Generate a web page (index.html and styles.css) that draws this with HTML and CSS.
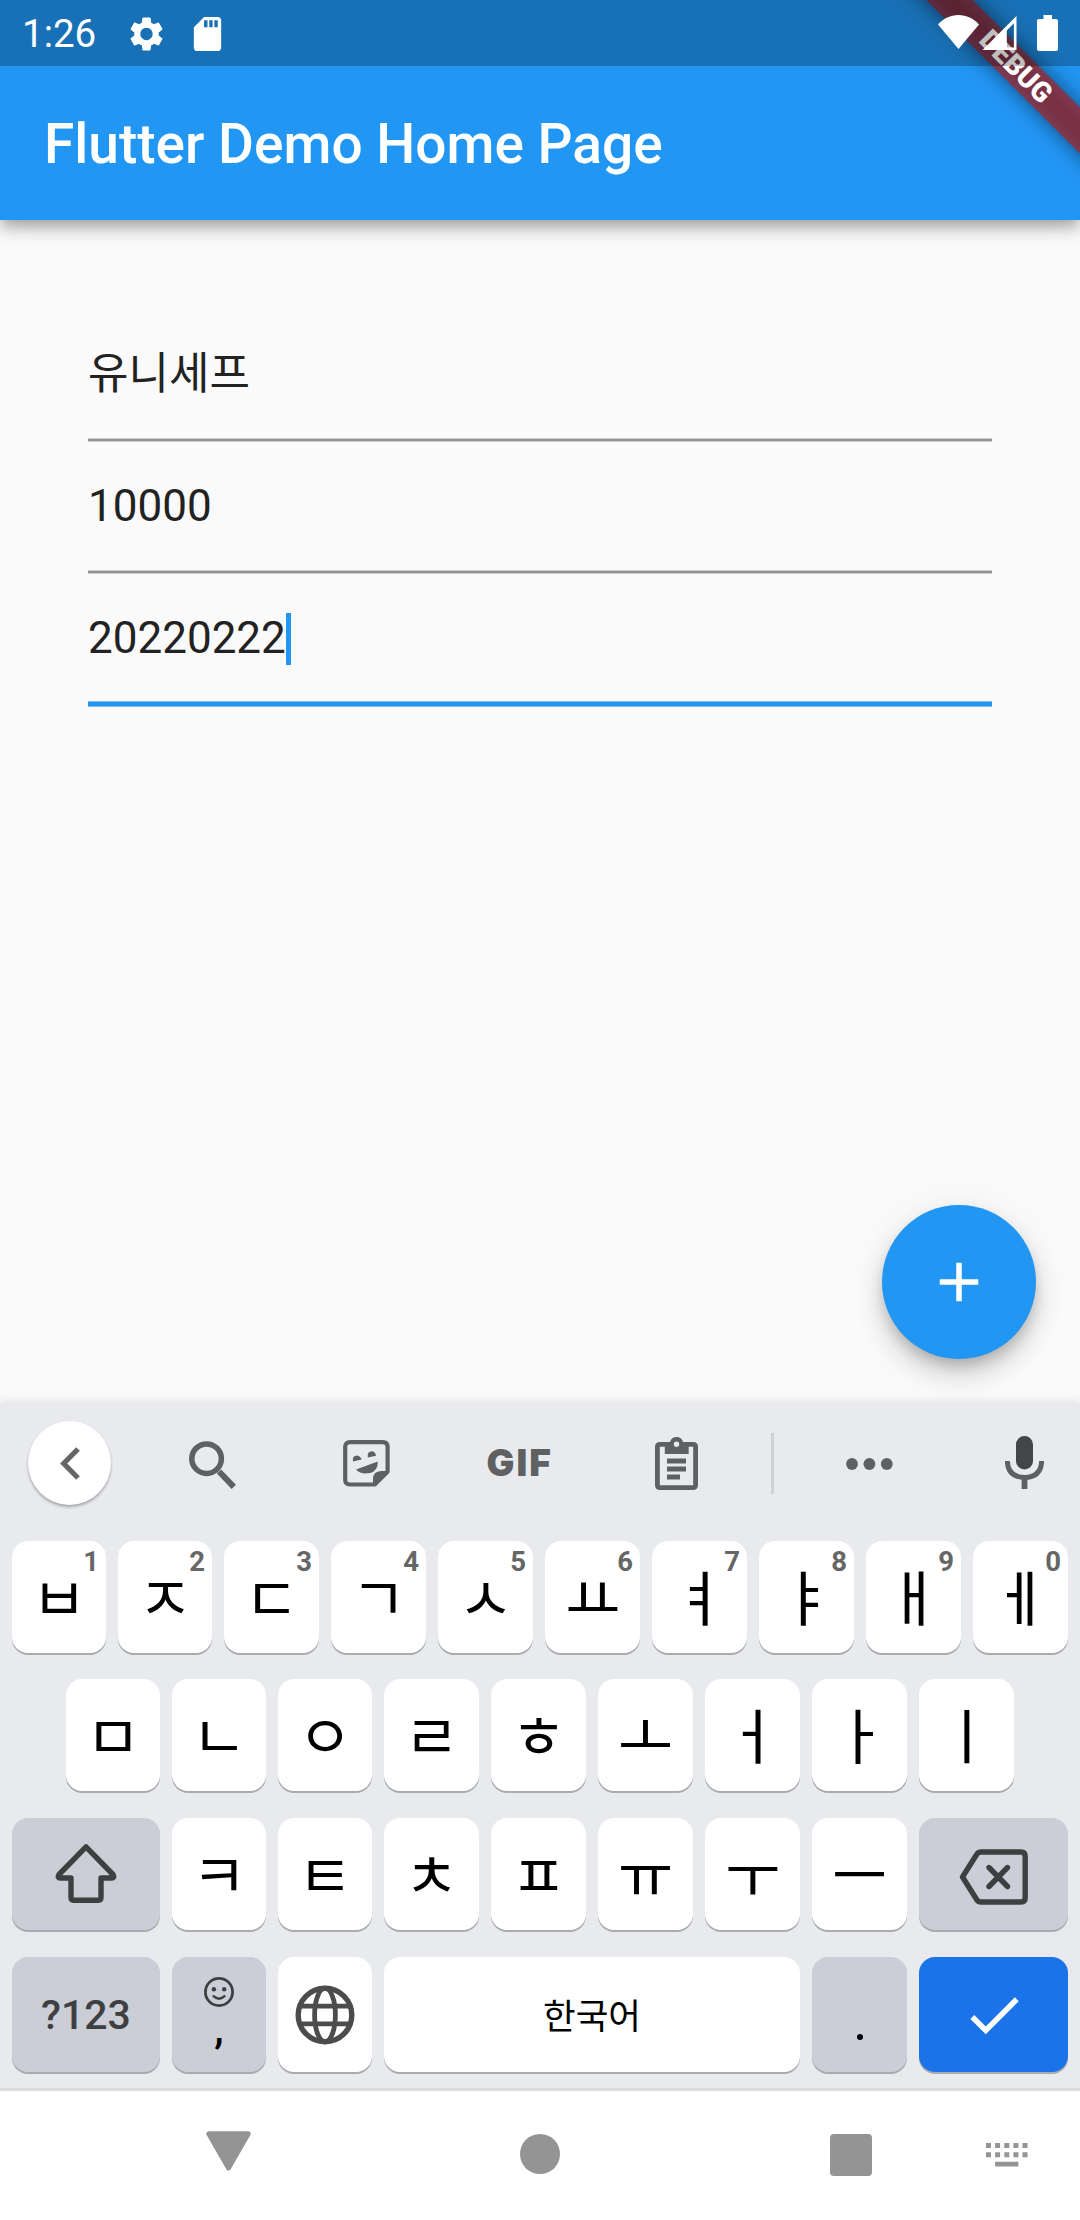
FILE: index.html
```html
<!DOCTYPE html>
<html lang="ko">
<head>
<meta charset="utf-8">
<title>Flutter Demo Home Page</title>
<link rel="stylesheet" href="styles.css">
</head>
<body>
<div class="screen">
  <div class="banner-clip"><div class="banner-shadow"></div><div class="banner">DEBUG</div></div>
  <header class="status">
    <span class="clock">1:26</span>
    <svg class="gear" viewBox="0 0 24 24"><path d="M19.14 12.94c.04-.3.06-.61.06-.94 0-.32-.02-.64-.07-.94l2.03-1.58c.18-.14.23-.41.12-.61l-1.92-3.32c-.12-.22-.37-.29-.59-.22l-2.39.96c-.5-.38-1.03-.7-1.62-.94l-.36-2.54c-.04-.24-.24-.41-.48-.41h-3.84c-.24 0-.43.17-.47.41l-.36 2.54c-.59.24-1.13.57-1.62.94l-2.39-.96c-.22-.08-.47 0-.59.22L2.74 8.87c-.12.21-.08.47.12.61l2.03 1.58c-.05.3-.09.63-.09.94s.02.64.07.94l-2.03 1.58c-.18.14-.23.41-.12.61l1.92 3.32c.12.22.37.29.59.22l2.39-.96c.5.38 1.03.7 1.62.94l.36 2.54c.05.24.24.41.48.41h3.84c.24 0 .44-.17.47-.41l.36-2.54c.59-.24 1.13-.56 1.62-.94l2.39.96c.22.08.47 0 .59-.22l1.92-3.32c.12-.22.07-.47-.12-.61l-2.01-1.58zM12 15.6c-1.98 0-3.6-1.62-3.6-3.6s1.62-3.6 3.6-3.6 3.6 1.62 3.6 3.6-1.62 3.6-3.6 3.6z"/></svg>
    <svg class="sd" viewBox="0 0 24 24"><path d="M18 2h-8L4.020 8 4 20c0 1.100.9 2 2 2h12c1.100 0 2-.9 2-2V4c0-1.100-.9-2-2-2zm-6 6h-2V4h2v4zm3 0h-2V4h2v4zm3 0h-2V4h2v4z"/></svg>
    <span class="spacer"></span>
    <svg class="wifi" viewBox="0 0 41 34"><path d="M0 9.500C5.500 3.500 12.500 0 20.500 0S35.500 3.500 41 9.500L20.500 34z"/></svg>
    <svg class="signal" viewBox="0 0 35 35"><path fill-rule="evenodd" d="M35 0V35H0zM32.300 7.500L25 15V32.500H32.300z"/></svg>
    <svg class="battery" viewBox="0 0 21 36"><path d="M6.500 0h8.500v4h4q2 0 2 2v28q0 2-2 2H2q-2 0-2-2V6q0-2 2-2h4.500z"/></svg>
  </header>
  <div class="appbar"><h1>Flutter Demo Home Page</h1></div>
  <main class="content">
    <div class="field">유니세프</div>
    <div class="field">10000</div>
    <div class="field focused">20220222<span class="caret"></span></div>
    <div class="fab"><svg width="66" height="66" viewBox="0 0 24 24"><path fill="#fff" d="M19 13h-6v6h-2v-6H5v-2h6V5h2v6h6v2z"/></svg></div>
  </main>
  <section class="keyboard">
    <div class="tools">
      <div class="back"><svg width="20" height="33" viewBox="0 0 20 33"><path fill="none" stroke="#666" stroke-width="5.200" d="M18 2L3.700 16.500L18 31"/></svg></div>
      <svg class="t-search" viewBox="0 0 47 48"><g fill="none" stroke="#5f6062"><circle cx="17.600" cy="17.700" r="14.800" stroke-width="5.500"/><path stroke-width="6" d="M30 30.500L44.800 45.800"/></g></svg>
      <svg class="t-sticker" viewBox="0 0 47 47"><path fill="none" stroke="#5f6062" stroke-width="4.200" stroke-linejoin="round" d="M7 2.200H39.800Q44.600 2.200 44.600 7V31.500L31.500 44.500H7Q2.200 44.500 2.200 39.700V7Q2.200 2.200 7 2.200z"/><g fill="#5f6062"><path d="M46 31H38Q30 31.500 30 39V46H33L46 33z"/><path d="M13 29.500L34.800 21.500Q35 31 27 33Q17.500 34.600 13 29.500z"/><path d="M10 21.500Q9 15.500 14 15.400Q17.500 15.800 18.600 19.500z"/><path d="M24.800 17.500Q24 11.300 29 11.200Q32.500 11.800 33 15.700z"/></g></svg>
      <span class="t-gif">GIF</span>
      <svg class="t-clip" viewBox="0 0 43 53"><path fill="#5f6062" fill-rule="evenodd" d="M5 5H15Q16.500 0 21.500 0T28 5H38Q43 5 43 10V48Q43 53 38 53H5Q0 53 0 48V10Q0 5 5 5zM4.800 9.700V48.200H38.200V9.700H33.700V17H9.800V9.700zM21.500 4.500A2.700 2.700 0 1 0 21.500 9.900A2.700 2.700 0 1 0 21.500 4.500z"/><path fill="#5f6062" d="M12 21.500h19v5h-19zM12 29.500h19v5h-19zM12 37.500h13v5h-13z"/></svg>
      <span class="t-divider"></span>
      <svg class="t-more" viewBox="0 0 47 12"><g fill="#5f6062"><circle cx="6" cy="6" r="5.900"/><circle cx="23.400" cy="6" r="5.900"/><circle cx="40.800" cy="6" r="5.900"/></g></svg>
      <svg class="t-mic" viewBox="0 0 39 53"><rect x="11" y="0" width="17" height="33.500" rx="8.500" fill="#444547"/><path fill="none" stroke="#5f6062" stroke-width="5" d="M2.400 25Q2.800 41 19.500 41.500Q36.200 41 36.600 25"/><path fill="none" stroke="#5f6062" stroke-width="5.800" d="M19.500 41V53"/></svg>
    </div>
    <div class="row r1">
      <div class="key"><i>1</i><b>ㅂ</b></div><div class="key"><i>2</i><b>ㅈ</b></div><div class="key"><i>3</i><b>ㄷ</b></div><div class="key"><i>4</i><b>ㄱ</b></div><div class="key"><i>5</i><b>ㅅ</b></div><div class="key"><i>6</i><b>ㅛ</b></div><div class="key"><i>7</i><b>ㅕ</b></div><div class="key"><i>8</i><b>ㅑ</b></div><div class="key"><i>9</i><b>ㅐ</b></div><div class="key"><i>0</i><b>ㅔ</b></div>
    </div>
    <div class="row r2">
      <div class="key"><b>ㅁ</b></div><div class="key"><b>ㄴ</b></div><div class="key"><b>ㅇ</b></div><div class="key"><b>ㄹ</b></div><div class="key"><b>ㅎ</b></div><div class="key"><b>ㅗ</b></div><div class="key"><b>ㅓ</b></div><div class="key"><b>ㅏ</b></div><div class="key"><b>ㅣ</b></div>
    </div>
    <div class="row r3">
      <div class="key wide mod shift"><svg width="62" height="60" viewBox="0 0 62 60"><path fill="none" stroke="#3e3f41" stroke-width="5.400" stroke-linejoin="round" d="M31 3.800L58 31.500Q60 35 56.500 35H46V54.500Q46 57.200 43.500 57.200H18.500Q16 57.200 16 54.500V35H5.500Q2 35 4 31.500z"/></svg></div>
      <div class="key"><b>ㅋ</b></div><div class="key"><b>ㅌ</b></div><div class="key"><b>ㅊ</b></div><div class="key"><b>ㅍ</b></div><div class="key"><b>ㅠ</b></div><div class="key"><b>ㅜ</b></div><div class="key"><b>ㅡ</b></div>
      <div class="key wide mod delete"><svg width="70" height="56" viewBox="0 0 70 56"><g fill="none" stroke="#3e3f41" stroke-width="5.400"><path stroke-linejoin="round" d="M3.500 28L17.800 5.200Q19.500 3 22 3H62Q66.200 3 66.200 7.200V48.800Q66.200 53 62 53H22Q19.500 53 17.800 50.800z"/><path stroke-linecap="round" d="M30 18.500L48.500 37.500M48.500 18.500L30 37.500"/></g></svg></div>
    </div>
    <div class="row r4">
      <div class="key wide mod sym">?123</div>
      <div class="key mod comma"><svg width="30" height="30" viewBox="0 0 30 30"><circle cx="15" cy="15" r="13.600" fill="none" stroke="#3e3f41" stroke-width="2.800"/><circle cx="9.900" cy="12.300" r="2.200" fill="#3e3f41"/><circle cx="20.200" cy="12.300" r="2.200" fill="#3e3f41"/><path fill="none" stroke="#3e3f41" stroke-width="2.400" stroke-linecap="round" d="M9.500 19.200Q15 24.200 20.500 19.200"/></svg><span>,</span></div>
      <div class="key"><svg width="60" height="60" viewBox="0 0 60 60"><g fill="none" stroke="#4c4c4d"><circle cx="30" cy="30" r="26.800" stroke-width="5.400"/><ellipse cx="30" cy="30" rx="10.400" ry="26.800" stroke-width="4.800"/><path stroke-width="4.800" d="M5 21.200H55M5 38.800H55"/></g></svg></div>
      <div class="key space">한국어</div>
      <div class="key mod dot"><svg width="6" height="6" viewBox="0 0 6 6"><circle cx="3" cy="3" r="3"/></svg></div>
      <div class="key wide enter"><svg width="66" height="66" viewBox="0 0 24 24"><path fill="#fff" d="M9 16.170L4.830 12l-1.420 1.410L9 19 21 7l-1.410-1.410z"/></svg></div>
    </div>
  </section>
  <nav class="nav">
    <svg class="n-back" viewBox="0 0 45 40"><path fill="#949494" stroke="#949494" stroke-width="5" stroke-linejoin="round" d="M2.800 2.800H42.200L22.500 37z"/></svg>
    <span class="n-home"></span>
    <span class="n-recent"></span>
    <svg class="n-kbd" viewBox="0 0 42 24"><path fill="#949494" d="M0 0h5v5h-5zM9.100 0h5v5h-5zM18.300 0h5v5h-5zM27.400 0h5v5h-5zM36.500 0h5v5h-5zM0 9.300h5v5h-5zM9.100 9.300h5v5h-5zM18.300 9.300h5v5h-5zM27.400 9.300h5v5h-5zM36.500 9.300h5v5h-5zM9.100 18.800h23.300v4.700h-23.300z"/></svg>
  </nav>
</div>
</body>
</html>
```
FILE: styles.css
```css
* { box-sizing: border-box; }
body { margin: 0; font-family: Roboto, "Noto Sans CJK KR", sans-serif; }
svg { display: block; flex: none; }
.screen { position: relative; width: 1080px; height: 2220px; display: flex; flex-direction: column; overflow: hidden; background: #fafafa; }

.status { position: relative; z-index: 4; height: 66px; display: flex; align-items: flex-start; background: rgba(0, 0, 0, .25); flex: none; }
.status svg { fill: #fff; }
.clock { color: #fff; font-size: 38.5px; line-height: 66px; margin-left: 22px; width: 104px; padding-top: 1px; }
.gear { width: 41px; height: 42px; margin-top: 12.500px; }
.sd { width: 41px; height: 42px; margin: 12.500px 0 0 20px; }
.spacer { flex: 1; }
.wifi { width: 41px; height: 34px; margin: 15px 3px 0 0; }
.signal { width: 35px; height: 34px; margin: 16px 20px 0 0; }
.battery { width: 21px; height: 36px; margin: 15px 22px 0 0; }

.appbar { position: relative; z-index: 2; margin-top: -66px; height: 220px; padding: 68px 44px 0; display: flex; align-items: center; background: #2196f3; flex: none; box-shadow: 0 5.5px 11px -2.75px rgba(0,0,0,.2), 0 11px 13.750px rgba(0,0,0,.14), 0 2.75px 27.5px rgba(0,0,0,.12); }
.appbar h1 { margin: 0; color: #fff; font-size: 55px; font-weight: 500; line-height: 64px; }

.banner-clip { position: absolute; z-index: 3; top: 0; right: 0; width: 260px; height: 260px; overflow: hidden; }
.banner, .banner-shadow { position: absolute; left: 45px; top: 48.500px; width: 300px; height: 33px; transform: rotate(45deg); }
.banner { padding-left: 3px; background: rgba(183, 28, 28, .63); color: #fff; font-size: 28px; font-weight: 900; line-height: 34px; text-align: center; }
.banner-shadow { background: rgba(0, 0, 0, .5); filter: blur(10.900px); }

.content { position: relative; height: 1183px; padding: 90px 88px 0; flex: none; }
.field { height: 132px; display: flex; align-items: center; padding-bottom: 5px; color: #222; font-size: 44px; line-height: 52px; background: linear-gradient(#cfcfcf 1px, #929292 1px 3px, #cfcfcf 3px) bottom / 100% 4px no-repeat; }
.field.focused { height: 133px; padding-bottom: 6px; background: linear-gradient(#7ac0f7 1px, #2196f3 1px 5px, #7ac0f7 5px) bottom / 100% 6px no-repeat; }
.caret { width: 5.5px; height: 52px; margin-top: 2px; background: #2196f3; }
.fab { position: absolute; right: 44px; bottom: 44px; width: 154px; height: 154px; border-radius: 50%; background: #2196f3; display: flex; align-items: center; justify-content: center; box-shadow: 0 8.250px 13.750px -2.750px rgba(0,0,0,.2), 0 16.500px 27.500px rgba(0,0,0,.14), 0 2.750px 40px rgba(0,0,0,.06); }

.keyboard { position: relative; height: 685px; background: #e8eaed; flex: none; box-shadow: 0 -2px 8px rgba(0,0,0,.1); }
.tools { height: 138px; display: flex; align-items: flex-start; padding-left: 28px; }
.back { width: 83px; height: 84px; margin-top: 18px; border-radius: 50%; background: #fff; display: flex; align-items: center; justify-content: center; box-shadow: 0 2px 3px rgba(0,0,0,.3); }
.t-search { width: 47px; height: 48px; margin: 38px 0 0 78px; }
.t-sticker { width: 47px; height: 47px; margin: 37px 0 0 107px; }
.t-gif { width: 70px; margin: 40px 0 0 96.5px; color: #5f6062; font: 900 37px/40px Inter, sans-serif; letter-spacing: 2px; }
.t-clip { width: 43px; height: 53px; margin: 34px 0 0 98.5px; }
.t-divider { width: 3px; height: 61px; margin: 30px 0 0 73px; background: #cfd1d5; }
.t-more { width: 47px; height: 12px; margin: 55px 0 0 72px; }
.t-mic { width: 39px; height: 53px; margin: 33px 0 0 112px; }

.row { display: flex; gap: 12px; padding: 0 12px; height: 112px; }
.r2 { margin-top: 26px; padding: 0 66px; }
.r3 { margin-top: 27px; }
.r4 { margin-top: 27px; height: 115px; }
.key { position: relative; width: 95px; flex: none; border-radius: 16px; background: #fff; display: flex; align-items: center; justify-content: center; box-shadow: 0 2px 0 #a9abae; color: #000; }
.key:nth-child(-n+2), .r2 .key:nth-child(3), .r3 .key:nth-child(3), .r4 .key:nth-child(3) { width: 94px; }
.key b { font: 400 60px/60px "Noto Sans CJK KR", sans-serif; margin-top: -5px; }
.key i { position: absolute; top: 5px; right: 7px; color: #666; font: 700 27.5px/32px Roboto, sans-serif; }
.key.wide { width: 149px; }
.key.wide:first-child { width: 148px; }
.mod { background: #cbced6; }
.shift { padding-bottom: 2px; }
.delete { padding-top: 5px; }
.sym { color: #3e3f41; font-size: 41px; font-weight: 500; }
.comma { flex-direction: column; justify-content: flex-start; padding-top: 20px; }
.comma span { font: 500 42px/48px Roboto, sans-serif; margin-top: -2px; }
.key.space { width: auto; flex: 1; padding-bottom: 2px; font-family: "Noto Sans CJK KR", sans-serif; font-size: 35.5px; }
.dot { align-items: flex-start; padding-top: 77px; }
.enter { background: #1a73e8; }

.nav { height: 132px; border-top: 3px solid #dfe1e1; background: #fff; display: flex; align-items: flex-start; flex: none; }
.n-back { width: 45px; height: 40px; margin: 40px 0 0 206px; }
.n-home { width: 40px; height: 40px; margin: 43px 0 0 269px; border-radius: 50%; background: #949494; }
.n-recent { width: 41.5px; height: 41.5px; margin: 43px 0 0 270px; border-radius: 4px; background: #949494; }
.n-kbd { width: 42px; height: 24px; margin: 52px 0 0 114.5px; }
```
